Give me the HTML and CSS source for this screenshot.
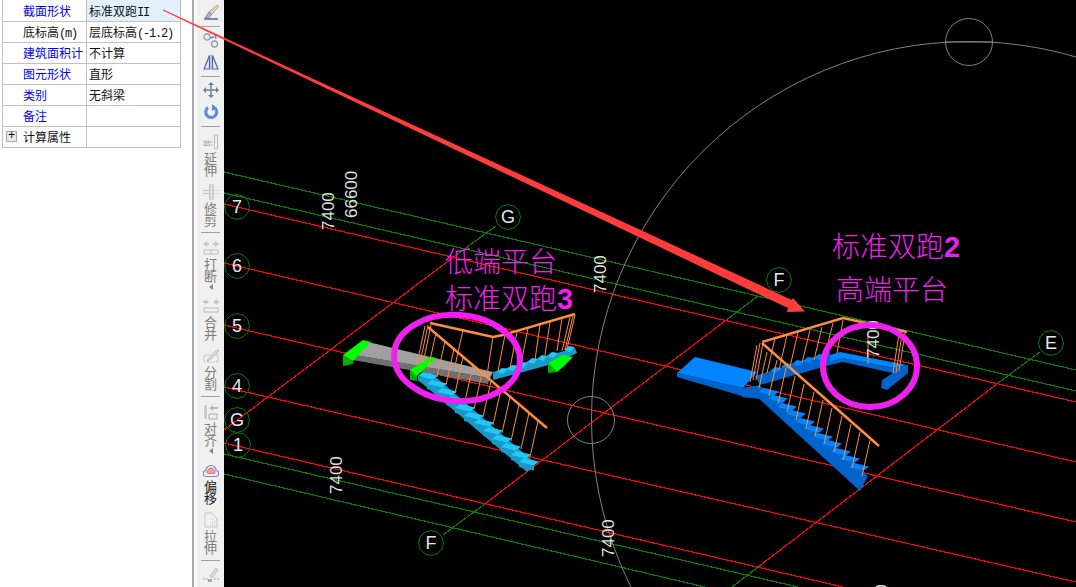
FILE: index.html
```html
<!DOCTYPE html>
<html>
<head>
    <title>标准双跑</title>
    <link rel="stylesheet" href="styles.css">
</head>
<body>
<div class="app">
    <!-- property panel -->
    <div class="panel">
        <table class="props">
            <tr><td class="key link">截面形状</td><td class="val selected">标准双跑<span class="latin">II</span></td></tr>
            <tr><td class="key">底标高<span class="latin">(m)</span></td><td class="val">层底标高<span class="latin">(-1.2)</span></td></tr>
            <tr><td class="key link">建筑面积计</td><td class="val">不计算</td></tr>
            <tr><td class="key link">图元形状</td><td class="val">直形</td></tr>
            <tr><td class="key link">类别</td><td class="val">无斜梁</td></tr>
            <tr><td class="key link">备注</td><td class="val"></td></tr>
            <tr><td class="key"><span class="expand">+</span>计算属性</td><td class="val"></td></tr>
        </table>
    </div>
    <div class="splitter"></div>

    <!-- edit toolbar -->
    <div class="toolbar">
        <div class="tool">
            <svg viewBox="0 0 16 16" class="icon"><path d="M1 15h14" stroke="#4a68a8" stroke-width="1.5"/><path d="M6 8l8-7 1.500 1.500-7 8z" fill="#e8d8b0" stroke="#8a8a70" stroke-width=".7"/><path d="M6 8l2.500 2.500-2.500 3.500H2z" fill="#c8a8d8" stroke="#6a6a90" stroke-width=".7"/></svg>
        </div>
        <div class="sep"></div>
        <div class="tool">
            <svg viewBox="0 0 16 16" class="icon"><circle cx="4" cy="5" r="3" fill="none" stroke="#8a9ab0" stroke-width="1.3"/><circle cx="11.500" cy="12" r="3" fill="none" stroke="#9a9a9a" stroke-width="1.3"/><path d="M7 6l4-1M12 2l1 5" stroke="#5a8ad0" stroke-width="1.3" fill="none"/></svg>
        </div>
        <div class="tool">
            <svg viewBox="0 0 16 16" class="icon"><path d="M6.500 1.500V15H1zM9.500 1.500V15H15z" fill="#e4e8f4" stroke="#4a6ab0" stroke-width="1.200"/><path d="M8 0v16" stroke="#999" stroke-width=".8"/></svg>
        </div>
        <div class="sep"></div>
        <div class="tool">
            <svg viewBox="0 0 16 16" class="icon"><path d="M8 1v14M1 8h14" stroke="#6a7f9a" stroke-width="1.500"/><path d="M8 0l3 3H5zM8 16l3-3H5zM0 8l3-3v6zM16 8l-3-3v6z" fill="#6a7f9a"/></svg>
        </div>
        <div class="tool">
            <svg viewBox="0 0 16 16" class="icon"><path d="M5 3.500A5.500 5.500 0 1 0 12 4" fill="none" stroke="#5b8ad8" stroke-width="3"/><path d="M9 0v7l5-3z" fill="#5b8ad8"/></svg>
        </div>
        <div class="sep"></div>
        <div class="tool label">
            <svg viewBox="0 0 16 16" class="icon"><path d="M11.500 1h3v14h-3z" fill="none" stroke="#bbb"/><path d="M1 7h6v1.500H1zM1 10h6v1.500H1z" fill="none" stroke="#aaa" stroke-width=".8"/><path d="M8.500 8h2M8.500 11h2" stroke="#888" stroke-dasharray="1 1"/></svg>
            <span class="name">延伸</span>
        </div>
        <div class="tool label">
            <svg viewBox="0 0 16 16" class="icon"><path d="M7 0v16M10 0v16" stroke="#aaa"/><path d="M0 6.500h6M0 9.500h6" stroke="#bbb"/><path d="M11 6.500h5M11 9.500h5" stroke="#ccc" stroke-dasharray="1 1"/></svg>
            <span class="name">修剪</span>
        </div>
        <div class="sep"></div>
        <div class="tool label more">
            <svg viewBox="0 0 16 16" class="icon"><path d="M0 4l4-3v2h2v2H4v2zM16 4l-4-3v2h-2v2h2v2z" fill="#c4c4c4"/><path d="M1 10h14v4H1z" fill="none" stroke="#bbb"/><path d="M8 10v4" stroke="#bbb"/></svg>
            <span class="name">打断</span>
        </div>
        <div class="tool label">
            <svg viewBox="0 0 16 16" class="icon"><path d="M6 4L2 1v2H0v2h2v2zM10 4l4-3v2h2v2h-2v2z" fill="#c4c4c4"/><path d="M1 10h14v4H1z" fill="none" stroke="#bbb"/></svg>
            <span class="name">合并</span>
        </div>
        <div class="tool label">
            <svg viewBox="0 0 16 16" class="icon"><path d="M1 7h14v7H1z" fill="none" stroke="#bbb" stroke-dasharray="2 1"/><path d="M5 11l9-9 2 1-9 9-3 1z" fill="#ddd" stroke="#aaa" stroke-width=".7"/></svg>
            <span class="name">分割</span>
        </div>
        <div class="sep"></div>
        <div class="tool label more">
            <svg viewBox="0 0 16 16" class="icon"><path d="M1 1h3v14H1z" fill="#ccc"/><path d="M6 4l4-3v2h5v2h-5v2z" fill="#bbb"/><path d="M6 10h8v5H6z" fill="none" stroke="#aaa"/></svg>
            <span class="name">对齐</span>
        </div>
        <div class="tool label">
            <svg viewBox="0 0 16 16" class="icon"><path d="M3.500 14.500a3 3 0 0 1-.5-6 5 5 0 0 1 10 0 3 3 0 0 1-.5 6z" fill="#eef2f8" stroke="#7a8aa8" stroke-width="1.200"/><path d="M5.500 11.500a1.500 1.500 0 0 1 0-3 2.500 2.500 0 0 1 5 0 1.500 1.500 0 0 1 0 3z" fill="#f4a0a0" stroke="#e05050" stroke-width=".8"/></svg>
            <span class="name active">偏移</span>
        </div>
        <div class="tool label">
            <svg viewBox="0 0 16 16" class="icon"><path d="M2 1h7l5 6v8H2z" fill="none" stroke="#c4c4c4"/><path d="M9 7h2M9 10h3M7 13h5" stroke="#bbb" stroke-dasharray="1 1"/></svg>
            <span class="name">拉伸</span>
        </div>
        <div class="sep"></div>
        <div class="tool">
            <svg viewBox="0 0 16 16" class="icon"><path d="M0 13h5M11 13h5" stroke="#aaa" stroke-dasharray="2 1"/><path d="M5 13h4v3H5z" fill="#aaa"/><path d="M7 10l6-8 2 2-6 8z" fill="#ddd" stroke="#aaa" stroke-width=".7"/></svg>
        </div>
    </div>

    <!-- 3d view -->
    <svg class="canvas" viewBox="224 0 852 587">
        <defs>
            <polygon id="bubble" class="bubble" points="12.500,0 10.800,6.250 6.250,10.800 0,12.500 -6.250,10.800 -10.800,6.250 -12.500,0 -10.800,-6.250 -6.250,-10.800 0,-12.500 6.250,-10.800 10.800,-6.250"/>
            <g id="step-a">
                <polygon class="cyan-d" points="-10,0 5,3.500 5,8.500 -10,5"/>
                <polygon class="cyan" points="-10,0 5,3.500 10,-.5 -5,-4"/>
            </g>
            <g id="step-b">
                <polygon class="blue-d" points="-10,0 5,3.500 5,8.500 -10,5"/>
                <polygon class="blue" points="-10,0 5,3.500 10,-.5 -5,-4"/>
            </g>
            <polygon id="tread-a" class="cyan" points="-5,0 0,-4 6,-3 1,2"/>
            <polygon id="tread-b" class="blue" points="-5,0 0,-4 6,-3 1,2"/>
        </defs>

        <g class="wire" shape-rendering="crispEdges">
            <path class="grn" d="M224 172L1076 370M224 193L1076 391M224 454L798 587M224 474L705 587"/>
            <path class="grn" d="M496 226L455 256M758 296L725 321M486 503L443 535M1040 352L997 384M758 567L732 587"/>
            <path class="red" d="M224 204L1076 402M224 263L1076 462M224 325L1076 522M224 387L1076 582M224 443L843 587"/>
            <path class="red" d="M455 256L224 430M725 321L486 503M997 384L758 567"/>
        </g>

        <g class="wire arc">
            <circle cx="969" cy="419" r="377.500"/>
            <circle cx="969" cy="42" r="23.500"/>
            <circle cx="591" cy="420" r="23.500"/>
            <path d="M946 42H993"/>
        </g>

        <!-- left stair -->
        <polygon class="gray-d" points="355,355 490,378 488,384 353,360"/>
        <polygon class="gray" points="355,355 368,342 493,372 490,378"/>
        <polygon class="green-d" points="343,355 353,361 353,364 343,366"/>
        <polygon class="green" points="343,355 363,340 371,342 353,361"/>
        <polygon class="cyan-d" points="493,372 550,355 575,348 577,353 556,363 493,380"/>
        <use href="#tread-a" x="502" y="372"/>
        <use href="#tread-a" x="512" y="369"/>
        <use href="#tread-a" x="522" y="366"/>
        <use href="#tread-a" x="532" y="362"/>
        <use href="#tread-a" x="542" y="359"/>
        <use href="#tread-a" x="552" y="356"/>
        <use href="#tread-a" x="569" y="350"/>
        <polygon class="green-d" points="548,363 557,372 548,373"/>
        <polygon class="green" points="548,363 563,355 573,357 563,367 557,372"/>
        <polygon class="cyan-d" points="418,380 430,372 535,463 527,472"/>
        <use href="#step-a" x="428" y="376"/>
        <use href="#step-a" x="437" y="384"/>
        <use href="#step-a" x="447" y="392"/>
        <use href="#step-a" x="456" y="400"/>
        <use href="#step-a" x="465" y="408"/>
        <use href="#step-a" x="474" y="416"/>
        <use href="#step-a" x="484" y="423"/>
        <use href="#step-a" x="493" y="431"/>
        <use href="#step-a" x="502" y="439"/>
        <use href="#step-a" x="511" y="447"/>
        <use href="#step-a" x="521" y="455"/>
        <use href="#step-a" x="529" y="462"/>
        <polygon class="green-d" points="410,370 417,372 417,381 410,380"/>
        <polygon class="green" points="410,370 422,362 430,357 437,358 420,373 417,376"/>
        <path class="rail" d="M428 327L547 428M430 323L493 337L503 335L575 314"/>
        <path class="post" d="M538 421l-8 36M529 413l-8 36M519 405l-8 36M510 397l-8 36M501 389l-8 36M491 381l-8 36M482 373l-8 36M473 365l-8 36M463 357l-8 36M454 349l-8 36M445 341l-8 36M436 333l-8 36"/>
        <path class="post" d="M463 330l-8 36M493 337l-6 38M505 335l-7 36M517 332l-7 36M528 328l-7 36M540 325l-5 35M550 322l-5 33M562 318l-5 33"/>
        <path class="post" d="M425 326l-8 38M428 325l-8 38M431 325l-8 38M570 317l-8 34M573 316l-8 34M575 315l-8 34"/>

        <!-- right stair -->
        <polygon class="blue-d" points="677,373 743,388 760,386 760,392 742,396 677,377"/>
        <polygon class="blue" points="677,373 695,357 757,372 743,388"/>
        <polygon class="blue-d" points="755,376 830,352 830,365 760,385"/>
        <use href="#tread-b" x="775" y="371"/>
        <use href="#tread-b" x="786" y="367"/>
        <use href="#tread-b" x="797" y="364"/>
        <use href="#tread-b" x="808" y="361"/>
        <use href="#tread-b" x="819" y="358"/>
        <polygon class="blue-d" points="830,362 842,358 895,368 908,365 908,373 887,390 881,388 882,380 893,373 843,362 830,365"/>
        <polygon class="blue" points="830,355 840,352 907,365 895,368 842,358 830,362"/>
        <polygon class="blue-d" points="742,388 760,385 768,395 760,399 742,397"/>
        <polygon class="blue-d" points="755,395 768,390 868,476 860,491"/>
        <use href="#step-b" x="769" y="392"/>
        <use href="#step-b" x="778" y="399"/>
        <use href="#step-b" x="787" y="407"/>
        <use href="#step-b" x="796" y="414"/>
        <use href="#step-b" x="805" y="422"/>
        <use href="#step-b" x="814" y="429"/>
        <use href="#step-b" x="823" y="437"/>
        <use href="#step-b" x="832" y="444"/>
        <use href="#step-b" x="841" y="452"/>
        <use href="#step-b" x="850" y="459"/>
        <use href="#step-b" x="859" y="467"/>
        <path class="rail" d="M762 343L879 446M762 342L843 318L907 332"/>
        <path class="post" d="M870 440l-8 36M860 432l-8 36M851 424l-8 36M842 416l-8 36M832 408l-8 36M823 400l-8 36M814 392l-8 36M804 384l-8 36M795 376l-8 36M786 368l-8 36M777 360l-8 36M767 352l-8 36"/>
        <path class="post" d="M775 338l-8 35M787 335l-8 35M798 332l-8 35M810 330l-8 33M822 327l-8 33M833 323l-8 32M843 320l-6 33"/>
        <path class="post" d="M757 345l-7 37M760 343l-7 37M763 343l-7 37M868 333v31M899 334l-6 39M902 334l-6 39M905 333l-6 38"/>

        <g class="dim">
            <text transform="translate(334,230) rotate(-90)">7400</text>
            <text transform="translate(357,218) rotate(-90)">66600</text>
            <text transform="translate(606,293) rotate(-90)">7400</text>
            <text transform="translate(342,494) rotate(-90)">7400</text>
            <text transform="translate(614,557) rotate(-90)">7400</text>
            <text transform="translate(879,358) rotate(-90)">7400</text>
            <text transform="translate(887,622) rotate(-90)">7400</text>
        </g>

        <ellipse class="mark" cx="457" cy="358" rx="63" ry="43" transform="rotate(4 457 358)"/>
        <ellipse class="mark" cx="870" cy="366" rx="47" ry="41"/>

        <use href="#bubble" x="237" y="207"/>
        <use href="#bubble" x="237" y="266"/>
        <use href="#bubble" x="237" y="326"/>
        <use href="#bubble" x="237" y="386"/>
        <use href="#bubble" x="237" y="420"/>
        <use href="#bubble" x="238" y="445"/>
        <use href="#bubble" x="508" y="217"/>
        <use href="#bubble" x="779" y="280"/>
        <use href="#bubble" x="431" y="543"/>
        <use href="#bubble" x="1051" y="343"/>
        <g class="axis">
            <text x="237" y="213">7</text>
            <text x="237" y="272">6</text>
            <text x="237" y="332">5</text>
            <text x="237" y="392">4</text>
            <text x="237" y="426">G</text>
            <text x="238" y="451">1</text>
            <text x="508" y="223">G</text>
            <text x="779" y="286">F</text>
            <text x="431" y="549">F</text>
            <text x="1051" y="349">E</text>
        </g>

        <g class="note">
            <text x="445" y="272">低端平台</text>
            <text x="445" y="309">标准双跑<tspan class="digit">3</tspan></text>
            <text x="832" y="257">标准双跑<tspan class="digit">2</tspan></text>
            <text x="836" y="300">高端平台</text>
        </g>
    </svg>

    <!-- arrow drawn over the whole shot -->
    <svg class="arrow" viewBox="0 0 1076 587">
        <polygon points="163.300,9.500 791.900,300 793,298 805,311.500 787,312 788.100,308.100 162.700,10.500"/>
    </svg>
</div>
</body>
</html>
```

FILE: styles.css
```css
html, body { margin: 0; padding: 0; background: #000; }
.app { position: relative; display: flex; width: 1076px; height: 587px; overflow: hidden; font-family: "Noto Sans CJK SC", "Liberation Sans", sans-serif; }

.panel { width: 192px; flex: none; background: #fff; }
.props { width: 179px; margin-left: 2px; border-collapse: collapse; table-layout: fixed; font-size: 12px; color: #111; }
.props td { height: 20px; padding: 0; border: 1px solid #c0c0c0; line-height: 20px; white-space: nowrap; overflow: hidden; }
.props tr:first-child td { height: 21px; border-top: none; }
.key { width: 84px; padding-left: 20px !important; box-sizing: border-box; position: relative; }
.key.link { color: #0000ff; }
.val { padding-left: 2px !important; }
.val.selected { background: #e1f0fb; }
.latin { font: 12px "Liberation Mono", monospace; letter-spacing: -1.200px; }
.expand { position: absolute; left: 3px; top: 4px; width: 9px; height: 9px; border: 1px solid #a8a8a8; background: #e8e8e8; font: 12px/9px "Liberation Mono", monospace; text-align: center; color: #000; }

.splitter { width: 5px; flex: none; background: linear-gradient(to right, #a8a8b0 2px, #f8f8f8 2px); }

.toolbar { width: 27px; flex: none; padding-top: 4px; box-sizing: border-box; background: #f0f0f0; display: flex; flex-direction: column; align-items: center; }
.tool { height: 22px; width: 100%; display: flex; flex-direction: column; align-items: center; flex: none; }
.tool.label { height: auto; padding: 2px 0 6px; }
.tool.more::after { content: ""; display: block; height: 0; margin: 2px 0 0; border: 3px solid transparent; border-left: 0; border-right: 4px solid #888; }
.icon { width: 16px; height: 16px; display: block; flex: none; }
.name { width: 13px; margin-top: 2px; font-size: 13px; line-height: 12px; color: #7c7c7c; word-break: break-all; }
.name.active { color: #1a1a1a; }
.sep { width: 19px; height: 1px; margin-bottom: 5px; flex: none; background: #a0a0a0; }

.canvas { width: 852px; height: 587px; flex: none; display: block; background: #000; }
.wire { fill: none; stroke-width: 1.200; }
.grn { stroke: #008000; }
.red { stroke: #ff0000; }
.arc { stroke: #808080; stroke-width: 1; }
.bubble { fill: none; stroke: #008000; stroke-width: 1; }
.axis text { font: 18px "Liberation Sans", sans-serif; fill: #e8e8e8; text-anchor: middle; }
.dim text { font: 17px "Liberation Sans", sans-serif; fill: #e0e0e0; }
.note text { font: 300 28px "Noto Sans CJK SC", sans-serif; fill: #f020f0; }
.note .digit { font: 700 29px "Liberation Sans", sans-serif; }
.mark { fill: none; stroke: #f020f0; stroke-width: 6; }

.rail { fill: none; stroke: #ff8c40; stroke-width: 2.500; }
.post { fill: none; stroke: #ff8c40; stroke-width: 1; }
.gray { fill: #a0a0a0; }
.gray-d { fill: #707070; }
.green { fill: #00ff00; }
.green-d { fill: #00b000; }
.cyan { fill: #20c8f8; }
.cyan-d { fill: #1a98c8; }
.blue { fill: #0084ff; }
.blue-d { fill: #0064cc; }

.arrow { position: absolute; left: 0; top: 0; width: 1076px; height: 587px; pointer-events: none; }
.arrow polygon { fill: #ff3c3c; }
```
